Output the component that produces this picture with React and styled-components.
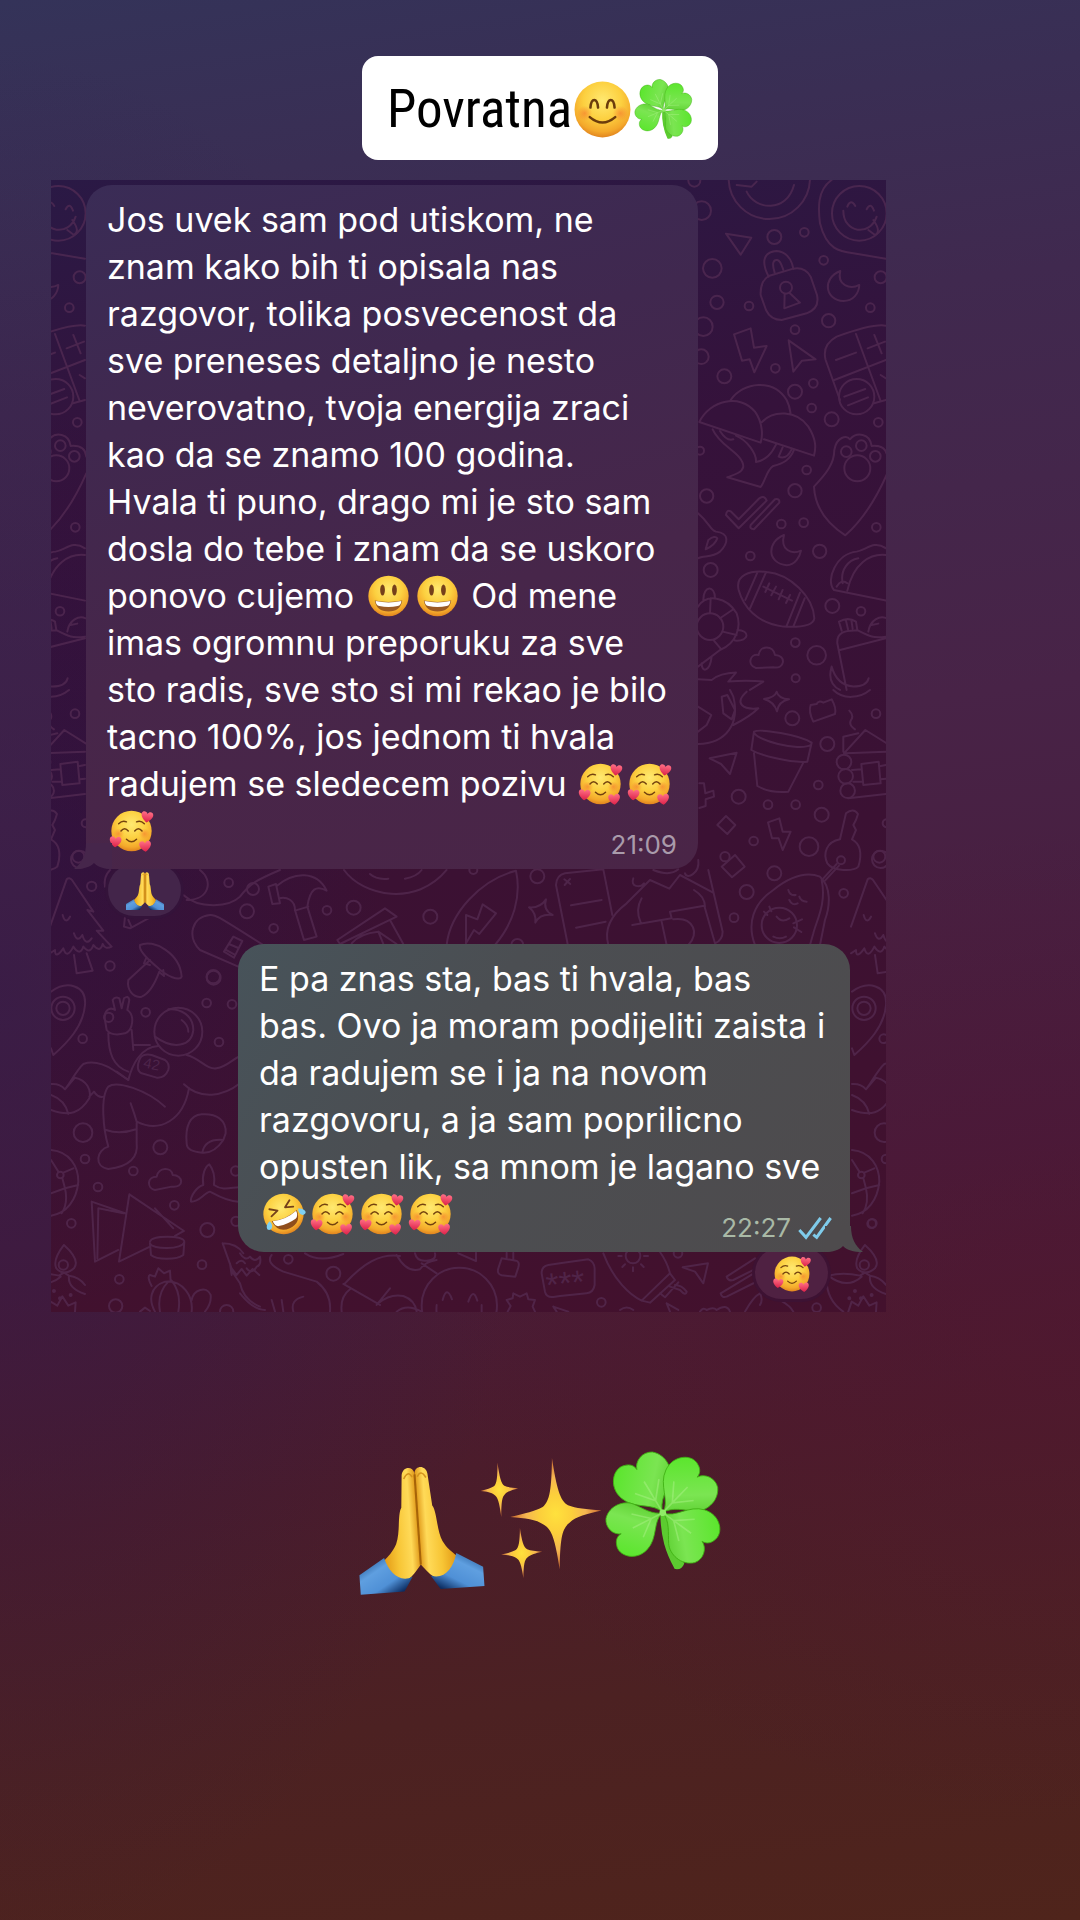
import React from 'react';
import styled, { createGlobalStyle } from 'styled-components';

const GlobalStyle = createGlobalStyle`
  * {
    box-sizing: border-box;
  }
  body {
    margin: 0;
    background: #4b2024;
  }
`;

const Page = styled.main`
  display: flex;
  flex-direction: column;
  min-height: 100vh;
  padding: 56px 51px;
  font-family: Inter, 'Liberation Sans', sans-serif;
  background:
    radial-gradient(ellipse 50% 50% at 0% 52%, rgba(42, 24, 74, 0.45), transparent),
    radial-gradient(ellipse 60% 26% at 100% 69%, rgba(84, 20, 50, 0.45), transparent),
    linear-gradient(
      172deg,
      #343359 0%,
      #40294f 20%,
      #482347 40%,
      #481b3a 62%,
      #4b1c2b 74%,
      #4c2122 86%,
      #4f241b 100%
    );
`;

const Title = styled.h1`
  display: flex;
  align-items: center;
  align-self: center;
  height: 104px;
  margin: 0 0 20px;
  padding: 2px 24px 0 25px;
  border-radius: 16px;
  background: #fff;
  color: #000;
  font-family: 'Liberation Sans Narrow', 'Roboto Condensed', sans-serif;
  font-size: 53px;
  font-weight: 400;
  line-height: 64px;
`;

const Chat = styled.section`
  position: relative;
  display: flex;
  flex-direction: column;
  width: 100%;
  max-width: 835px;
  padding: 5px 36px 13px 35px;
  background:
    radial-gradient(ellipse 40% 40% at 0% 60%, rgba(36, 20, 78, 0.35), transparent),
    linear-gradient(172deg, #2a1945 0%, #35123b 26%, #3b1133 60%, #43112d 100%);
`;

const Wallpaper = styled.svg`
  position: absolute;
  inset: 0;
  width: 100%;
  height: 100%;
  fill: none;
  stroke: #5a3058;
  stroke-width: 6;
  stroke-linejoin: round;
  stroke-linecap: round;
  opacity: 0.62;

  text {
    fill: #5a3058;
    stroke: none;
    font-family: 'Liberation Sans', sans-serif;
  }
`;

const Message = styled.article`
  position: relative;
  display: flex;
  flex-direction: column;
  align-items: ${(props) => (props.$own ? 'flex-end' : 'flex-start')};
  align-self: ${(props) => (props.$own ? 'flex-end' : 'flex-start')};
  width: 100%;
  max-width: 612px;

  & + & {
    margin-top: 28px;
  }
`;

const Bubble = styled.div`
  position: relative;
  width: 100%;
  padding: 11px 21px 10px;
  border-radius: 26px;
  color: #fff;
  background: ${(props) =>
    props.$own
      ? 'linear-gradient(125deg, #47535a 0%, #4b4e52 35%, #4e4b4d 100%)'
      : 'linear-gradient(165deg, #3a2c56 0%, #40284f 30%, #47264a 60%, #4a2547 100%)'};
`;

const Tail = styled.svg`
  position: absolute;
  bottom: 0;
  width: 38px;
  height: 26px;
  ${(props) => (props.$own ? 'right: -13px; transform: scaleX(-1);' : 'left: -12px;')}
  fill: ${(props) => (props.$own ? '#4e4b4d' : '#46264b')};
`;

const Line = styled.p`
  margin: 0;
  font-size: 34px;
  line-height: 47px;
  white-space: pre;
`;

const LastLine = styled.div`
  display: flex;
  justify-content: space-between;
  min-height: 52px;
`;

const Meta = styled.div`
  display: flex;
  align-items: center;
  align-self: flex-end;
  gap: 7px;
  color: ${(props) => (props.$own ? '#a9b9a6' : '#a99bab')};
  font-size: 26px;
  line-height: 28px;
`;

const Ticks = styled.svg`
  width: 34px;
  height: 24px;
  margin-right: -3px;
  fill: none;
  stroke: #7fcbea;
  stroke-width: 9;
`;

const Reaction = styled.button`
  display: flex;
  align-items: center;
  justify-content: center;
  width: 73px;
  height: 52px;
  margin: -5px 22px 0;
  padding: 2px 0 0;
  border: 0;
  border-radius: 26px;
  background: ${(props) => (props.$own ? '#4f2142' : '#43254a')};
  box-shadow: 0 0 0 3px ${(props) => (props.$own ? '#3d1233' : '#34133a')};
`;

const Glyph = styled.svg`
  flex: none;
  width: ${(props) => props.$size}px;
  height: ${(props) => props.$size}px;
`;

const InlineGlyph = styled(Glyph)`
  width: 49px;
  height: 44px;
  vertical-align: -10px;
`;

const Stickers = styled.div`
  display: flex;
  align-items: center;
  justify-content: center;
  margin-top: 146px;
  transform: rotate(-4deg);
`;

const HiddenDefs = styled.svg`
  position: absolute;
  width: 0;
  height: 0;
`;

const EmojiPaints = () => (
  <HiddenDefs aria-hidden="true">
    <defs>
      <radialGradient id="face" cx="50%" cy="34%" r="68%">
        <stop offset="0" stopColor="#ffe971" />
        <stop offset="0.5" stopColor="#fcd040" />
        <stop offset="0.82" stopColor="#f4a92b" />
        <stop offset="1" stopColor="#dd7d1d" />
      </radialGradient>
      <radialGradient id="blush">
        <stop offset="0" stopColor="#f4662b" stopOpacity="0.5" />
        <stop offset="1" stopColor="#f4662b" stopOpacity="0" />
      </radialGradient>
      <linearGradient id="heart" x1="0" y1="0" x2="0" y2="1">
        <stop offset="0" stopColor="#ff6f86" />
        <stop offset="1" stopColor="#dc2048" />
      </linearGradient>
      <linearGradient id="hand" x1="0" y1="0" x2="1" y2="0">
        <stop offset="0" stopColor="#e39a16" />
        <stop offset="0.4" stopColor="#f7c535" />
        <stop offset="0.78" stopColor="#ffda58" />
        <stop offset="1" stopColor="#e0991a" />
      </linearGradient>
      <linearGradient id="cuff" x1="0.1" y1="0" x2="0.9" y2="0.9">
        <stop offset="0" stopColor="#1f5492" />
        <stop offset="0.35" stopColor="#5f9fe0" />
        <stop offset="0.7" stopColor="#4f90d6" />
        <stop offset="1" stopColor="#0c2d62" />
      </linearGradient>
      <radialGradient id="star">
        <stop offset="0" stopColor="#ffe13d" />
        <stop offset="0.35" stopColor="#fccf3b" />
        <stop offset="0.65" stopColor="#f5b651" />
        <stop offset="1" stopColor="#c9662f" />
      </radialGradient>
      <linearGradient id="leaf" x1="0" y1="0" x2="1" y2="1">
        <stop offset="0" stopColor="#55e626" />
        <stop offset="0.55" stopColor="#7be552" />
        <stop offset="1" stopColor="#45bd17" />
      </linearGradient>
      <path
        id="leafShape"
        d="M0 0C-1-5-8-6-10-12C-12-18-7-23-3-21.500C-1-21 0-19.500 0-18C1-21 5-22.500 8-20.500C12-17 11-11 8-8.500C5-6 1-4 0 0Z"
      />
      <path id="heartShape" d="M0 5C-3 3-6 0-5.500-3C-5-6-1-6 0-3C1-6 5-6 5.500-3C6 0 3 3 0 5Z" />
      <path
        id="starShape"
        d="M0-22C1-10 2-5 5-3C8-1.500 12-1 18 0C12 1 8 1.500 5 4C2 6 1 10 0 22C-1 10-2 6-5 4C-8 1.500-12 1-18 0C-12-1-8-1.500-5-3C-2-5-1-10 0-22Z"
      />
    </defs>
  </HiddenDefs>
);

const PrayHalf = () => (
  <>
    <path
      d="M24 2.500C23.500-.5 19.500-.4 19 3L18 15.500C16.300 18 17 25 15 29.500C13.500 32.500 11.500 34 10 35.500C11 40 14.500 43.500 18.500 43.500C20.500 42.500 22 40.500 24 38Z"
      fill="url(#hand)"
    />
    <path d="M19.700 4.500Q21.500 1 23 4" stroke="#d4931d" strokeWidth="0.6" fill="none" />
    <path d="M10 34.500L0 40.500V48H17L20.500 42.500C15.500 44.500 11.500 40.500 10 34.500Z" fill="url(#cuff)" />
  </>
);

const emojis = {
  blush: (
    <>
      <circle cx="24" cy="24" r="22" fill="url(#face)" />
      <circle cx="10" cy="27" r="6" fill="url(#blush)" />
      <circle cx="38" cy="27" r="6" fill="url(#blush)" />
      <g fill="none" stroke="#6b3c0c" strokeLinecap="round" strokeWidth="2">
        <path d="M14.500 22.500Q15 16.500 17.500 16.500T20.500 22.500" />
        <path d="M27.500 22.500Q28 16.500 30.500 16.500T33.500 22.500" />
        <path d="M14 30Q24 38.500 34 30" />
      </g>
    </>
  ),
  grin: (
    <>
      <circle cx="24" cy="24" r="22" fill="url(#face)" />
      <ellipse cx="17.500" cy="17.500" rx="2.600" ry="6" fill="#75401a" />
      <ellipse cx="30.500" cy="17.500" rx="2.600" ry="6" fill="#75401a" />
      <path d="M9 29Q24 32 39 29Q37 41 24 41T9 29Z" fill="#9a5a24" />
      <path d="M10 29.500Q24 32.500 38 29.500Q38 34 34 35Q24 37 14 35Q10 34 10 29.500Z" fill="#fff" />
    </>
  ),
  love: (
    <>
      <circle cx="24" cy="24" r="22" fill="url(#face)" />
      <circle cx="10" cy="27" r="6" fill="url(#blush)" />
      <circle cx="38" cy="27" r="6" fill="url(#blush)" />
      <g fill="none" stroke="#73420f" strokeLinecap="round" strokeWidth="1.600">
        <path d="M10 16Q14 12 18.500 14" />
        <path d="M29.500 14Q34 12 38 16" />
        <path d="M12.500 24Q16.500 19 20.500 24" />
        <path d="M27.500 24Q31.500 19 35.500 24" />
        <path d="M18.500 33Q24 38.500 29.500 33" />
      </g>
      <use href="#heartShape" transform="translate(41 9) rotate(8) scale(1.150)" fill="url(#heart)" />
      <use href="#heartShape" transform="translate(6.500 36) rotate(4) scale(1.150)" fill="url(#heart)" />
      <use href="#heartShape" transform="translate(39 41) rotate(-4) scale(1.150)" fill="url(#heart)" />
    </>
  ),
  rofl: (
    <g transform="rotate(-24 24 24)">
      <circle cx="24" cy="24" r="22" fill="url(#face)" />
      <g fill="none" stroke="#75401a" strokeWidth="2" strokeLinecap="round" strokeLinejoin="round">
        <path d="M12 13L19.500 18L11 21" />
        <path d="M36 13L28.500 18L37 21" />
      </g>
      <path d="M9 26Q24 31 39 26Q38 41 24 41T9 26Z" fill="#8f4e1c" />
      <path d="M10 26.500Q24 31 38 26.500Q38 33 34 34Q24 36 14 34Q10 33 10 26.500Z" fill="#fff" />
      <path d="M1 32Q1 27 7 25Q9 30 6 33Q3 35 1 32Z" fill="#7fd0f2" />
      <path d="M47 32Q47 27 41 25Q39 30 42 33Q45 35 47 32Z" fill="#7fd0f2" />
    </g>
  ),
  pray: (
    <>
      <PrayHalf />
      <g transform="translate(48 0) scale(-1 1)">
        <PrayHalf />
      </g>
      <path d="M24 3V38" stroke="#a76408" strokeWidth="0.8" />
    </>
  ),
  sparkles: (
    <g fill="url(#star)">
      <use href="#starShape" transform="translate(30 22)" />
      <use href="#starShape" transform="translate(8.500 11) scale(0.410 0.490)" />
      <use href="#starShape" transform="translate(15.500 36.500) scale(0.450)" />
    </g>
  ),
  clover: (
    <>
      <path
        d="M23.500 25C23 34 24.500 40 27.500 46.500Q29.500 47 30.500 45C27 39 25 33 25 25Z"
        fill="#5ccb30"
        stroke="#5ccb30"
        strokeWidth="1"
        strokeLinejoin="round"
      />
      {[
        [-27, 1.1],
        [48, 1.08],
        [-113, 1.02],
        [130, 1.06],
      ].map(([angle, scale]) => (
        <g key={angle} transform={`translate(24 24.500) rotate(${angle}) scale(${scale})`}>
          <use href="#leafShape" fill="url(#leaf)" stroke="#3fb012" strokeWidth="0.3" />
          <path
            d="M0 0V-13M0-5L-5-11M0-5L5-11"
            fill="none"
            stroke="#b6f593"
            strokeOpacity="0.4"
            strokeWidth="0.6"
          />
        </g>
      ))}
      <circle cx="24" cy="24.500" r="1.300" fill="#8fec66" />
    </>
  ),
};

const labels = {
  blush: '😊',
  grin: '😃',
  love: '🥰',
  rofl: '🤣',
  pray: '🙏',
  sparkles: '✨',
  clover: '🍀',
};

const Emoji = ({ name, size, as: Component = Glyph }) => (
  <Component $size={size} viewBox="0 0 48 48" overflow="visible" role="img" aria-label={labels[name]}>
    {emojis[name]}
  </Component>
);

// each doodle block is drawn at 3x, "repeat" is the horizontal period of the wallpaper
const doodles = [
  {
    x: 640,
    y: 170,
    repeat: -801,
    dots: [
      [185, 122, 28], [403, 201, 21], [493, 187, 13], [217, 295, 28], [551, 271, 13], [722, 322, 18],
      [231, 397, 20], [327, 408, 13], [691, 413, 13], [566, 452, 20], [465, 479, 13], [190, 470, 28],
      [184, 560, 22], [406, 595, 13], [253, 619, 21], [520, 640, 13], [465, 665, 21], [515, 714, 13],
      [575, 748, 21], [715, 757, 13], [500, 900, 13], [465, 962, 20], [200, 978, 20], [424, 1062, 13],
      [491, 1058, 13], [709, 1072, 13], [539, 1144, 20], [331, 1158, 13], [212, 1200, 21],
      [577, 1308, 21], [663, 1324, 13], [466, 1418, 13], [530, 1456, 28], [467, 1525, 12],
      [163, 32, 18], [658, 130, 82], [388, 25, 122], [438, 353, 18], [650, 680, 53], [664, 827, 16],
      [619, 845, 16], [706, 859, 16], [652, 895, 39], [210, 1370, 40], [180, 842, 12],
    ],
    lines: [
      'M258 191L334 203L302 254Z',
      'M386 318Q360 335 362 375L378 420Q392 450 425 450L500 430Q540 415 531 375L512 320Q495 290 460 296Z',
      'M386 320C360 270 375 245 410 243C440 245 455 270 460 296M404 308C395 280 400 268 412 270C422 272 425 285 430 300M434 372L433 415L480 398L448 368',
      'M601 303C545 325 555 390 610 393C640 393 657 370 658 345C630 360 590 345 601 303Z',
      'M282 493L332 475L342 533L380 528L343 607L329 568L306 572Z',
      'M446 511L527 568L486 572L460 605Z',
      'M738 467Q700 460 590 500Q545 525 557 570L600 690M648 492L722 693M583 630L738 570M588 570L648 548M683 535L735 515M703 495L725 550M613 680L676 657M624 706L684 682M702 700L738 690M722 615L738 625',
      'M178 756C210 690 300 670 345 725C370 760 368 800 362 818L178 756M272 690C310 635 400 625 440 690C450 710 450 720 452 733M366 756C400 720 470 720 505 770C530 810 528 835 522 857L372 808',
      'M218 778C240 830 310 850 310 890C305 910 280 915 262 922L362 951C375 935 380 900 400 888C430 880 450 870 462 840M288 797C320 810 350 850 348 876C380 870 395 850 408 824M240 783Q260 815 280 808M428 832L416 860Q440 870 455 838',
      'M522 950C560 910 583 880 583 840C590 800 620 795 630 808C650 785 690 790 695 828C730 825 740 840 742 860M522 950C525 1010 560 1060 616 1096C680 1040 720 960 742 910',
      'M258 1035Q260 1018 272 1024L296 1048L358 985Q375 975 380 992L296 1075ZM332 1065L405 988Q420 985 418 998L342 1078Q328 1078 332 1065Z',
      'M174 1030C210 1060 210 1080 228 1085C270 1090 265 1120 240 1145C215 1165 190 1155 174 1165M197 1138L205 1110Q225 1095 232 1105Q225 1125 197 1138Z',
      'M432 1095C380 1115 380 1180 440 1186C465 1185 480 1160 483 1142C455 1155 420 1140 432 1095Z',
      'M296 1260C285 1215 330 1200 380 1206C450 1212 520 1280 523 1345C520 1370 470 1372 430 1370C350 1360 310 1310 296 1260ZM316 1290L352 1208M330 1315L378 1207M440 1368L480 1268M460 1370L494 1285M370 1250L456 1292M388 1240l-12 26M408 1250l-14 26M428 1260l-12 28M450 1275l-12 24',
      'M582 1260C555 1230 590 1150 650 1145C680 1140 700 1110 738 1135M738 1155C690 1150 640 1180 622 1262M582 1260L738 1292M608 1240C600 1200 625 1170 655 1165M590 1250Q605 1225 622 1240',
      'M174 1310C200 1270 260 1280 290 1330C305 1370 290 1420 240 1440L174 1490M210 1330L212 1285M240 1345L280 1318M248 1385L290 1395M220 1410L242 1436M190 1290C190 1245 225 1245 225 1285M292 1380C330 1380 330 1415 285 1412M185 1480C185 1510 210 1505 215 1460',
      'M348 1494C320 1485 330 1450 356 1455C360 1425 400 1425 405 1455C440 1455 435 1500 400 1492Z',
      'M605 1382L597 1355Q625 1340 648 1355L652 1380M618 1352l6 26M634 1350l4 26M592 1420C590 1390 610 1380 655 1382C690 1400 700 1405 738 1400M592 1420L620 1560M600 1440L738 1405M685 1385C690 1350 720 1335 740 1345M695 1365l20-4M575 1490Q590 1545 640 1550Q680 1550 686 1525M575 1490Q560 1540 600 1560',
      'M622 110Q632 85 646 108M680 118Q692 95 702 122M610 122C610 190 690 200 710 140M685 180L705 195Q725 185 700 150',
      'M575 30C530 60 535 120 540 160C560 240 600 245 640 250L738 266M320 65C345 120 440 130 462 45M290 45L335 50L350 35',
      'M174 1528L215 1530Q240 1510 288 1508L265 1535Q320 1530 370 1535L330 1560',
    ],
  },
  {
    x: 640,
    y: 690,
    repeat: -801,
    dots: [
      [457, 85, 21], [708, 71, 13], [562, 162, 21], [535, 285, 13], [296, 320, 21], [384, 344, 13],
      [467, 344, 13], [545, 374, 21], [341, 453, 13], [507, 470, 28], [403, 550, 21], [320, 606, 21],
      [282, 683, 13], [611, 610, 13], [722, 508, 26], [612, 216, 22], [617, 259, 22], [623, 302, 22],
      [603, 511, 12], [255, 500, 14], [418, 706, 53], [740, 400, 12],
    ],
    lines: [
      'M410 5Q415 25 447 28Q415 35 411 64Q402 35 372 27Q405 22 410 5Z',
      'M512 45Q505 65 520 95L585 72Q590 55 575 28L550 38Q535 30 530 42Z',
      'M342 125C360 115 480 135 515 158L502 215C450 220 360 195 334 180ZM342 125C340 150 480 185 512 165M342 190L352 288Q390 310 445 305L490 218',
      'M209 205L290 188L270 252L243 222Z',
      'M178 280l14 0l4 30l24-8l2 18l-25 8l0 20l-19 6',
      'M232 405L258 378L286 405L262 432ZM245 530L285 495L314 530L276 562Z',
      'M384 397L418 385L428 425L452 425L428 480L416 445L396 445Z',
      'M612 190L676 120L740 160M618 190L738 185M610 185L610 140L655 130M636 240L664 238M664 222L716 215L722 280L670 285ZM640 275L668 275M625 325L738 312M722 228L738 225M722 268L738 266M628 62q15 15 5 28q-8 15 12 28',
      'M600 448L618 370Q640 352 654 372L648 390L640 405L648 420L636 448C660 460 668 490 655 530C640 545 580 545 562 520C548 490 560 455 600 448M590 522L550 565M597 527L555 572',
      'M345 765C320 700 340 640 400 600C450 560 500 545 540 560C575 590 570 650 555 690L540 765M545 570C560 640 530 690 520 730L510 765M445 600q5 18 22 15M478 620q5 15 22 15M448 630q8 18 25 10M410 680q15 20 38 5M400 740q20 10 38 0M460 700l26-12M462 712l22 14M372 665l10 10M388 650l6 14',
      'M174 162C260 160 300 100 280 20L270 0M245 20L262 15L285 60L275 88L250 70ZM174 50L214 75L200 105L174 125M320 5C280 40 310 60 355 55C330 80 300 95 280 105',
      'M580 0C610 30 660 25 690 0',
    ],
  },
  {
    x: 440,
    y: 860,
    dots: [[292, 49, 21], [232, 255, 18], [100, 30, 12]],
    lines: [
      'M20 255C30 160 120 60 228 32C245 110 220 190 165 255M78 250L78 165L112 178L128 133L168 160L118 222L102 210L78 250',
      'M318 118Q308 150 338 165Q300 160 286 188Q290 160 267 142Q300 145 318 118Z',
      'M383 252L348 75Q350 45 375 40L490 28L517 165M393 136L485 120M408 203L497 185M373 58l18 14M390 57l-16 18',
      'M505 255C490 200 520 160 560 130L630 60L688 86L720 45L818 97M580 55C570 80 600 85 612 70M577 195L695 175L690 155L793 137L825 250M665 185L680 255M700 178C760 170 780 220 745 255M605 115Q585 150 602 187M762 90Q795 110 795 140M805 30L848 215Q848 240 825 250M775 0C780 40 740 60 735 40M640 30Q690 50 715 28',
    ],
  },
  {
    x: 50,
    y: 720,
    repeat: 801,
    dots: [
      [125, 499, 14], [180, 738, 14], [536, 488, 13], [609, 507, 18], [591, 574, 21], [671, 625, 13],
      [831, 571, 13], [911, 563, 21], [1141, 590, 21], [85, 410, 18], [490, 770, 20],
    ],
    lines: [
      'M0 620L50 478Q58 470 66 480L130 575L112 570L160 632L140 632L185 680Q165 690 158 672Q150 700 130 675Q120 705 100 680Q90 710 70 680Q50 720 40 685Q15 720 15 690L0 700M72 705L80 760L128 752L110 700M38 585q8 30 22 5M72 640q10 30 25 5q10 35 28 10',
      'M655 500L678 492L690 550L667 552ZM680 498C730 455 800 450 830 512C800 495 780 505 772 560L800 650L762 660L735 570C735 540 710 530 688 535M735 572L775 560',
      'M565 740L450 690C410 650 425 590 480 585C500 583 520 600 640 675M550 650l-28 45l30 18l25-50ZM537 672l28 12M528 690l26 14',
      'M400 525C450 570 540 560 570 530C600 490 620 480 690 450M450 450C490 480 480 540 410 540',
      'M862 660L1005 565L1040 590L870 672ZM1020 600L1060 672M905 670Q930 640 985 635L1000 672M985 635L1040 672',
      'M882 450C940 530 1100 560 1190 450M960 462Q980 480 1015 476M1065 476Q1100 470 1115 450',
      'M225 590L222 620L240 625L295 595M235 600L245 622M165 500Q160 470 180 450',
    ],
  },
  {
    x: 40,
    y: 930,
    repeat: 801,
    dots: [
      [521, 143, 21], [500, 219, 13], [576, 223, 13], [317, 247, 13], [128, 326, 13], [69, 235, 35],
      [69, 235, 20], [537, 336, 13], [129, 608, 28], [361, 652, 21], [135, 687, 13], [280, 723, 13],
      [174, 771, 13], [403, 826, 13], [94, 880, 13], [502, 900, 21], [486, 1004, 13], [238, 1048, 13],
      [227, 1128, 20], [587, 723, 14], [588, 874, 14], [61, 735, 10], [415, 305, 72], [560, 1145, 20],
      [206, 262, 14],
    ],
    lines: [
      'M300 45C340 25 420 70 425 140C420 155 380 140 350 110C320 85 295 60 300 45ZM330 90L265 150C260 180 280 205 305 200C330 190 345 160 358 125M318 85L312 100L330 105M370 120L372 138L360 128',
      'M33 185C80 150 140 165 135 225C130 290 80 340 40 375L33 355',
      'M345 320C400 360 455 350 460 300C460 255 420 235 385 238M425 270Q445 285 445 305',
      'M195 270C190 240 210 230 225 240L218 210Q225 198 238 205L245 235L252 205Q265 195 268 210L262 240C285 255 280 300 255 310Q215 320 200 300ZM205 310C205 370 220 410 265 425M275 300L280 360M355 348C300 350 275 410 265 450L230 425M280 345L330 345',
      'M300 385Q310 370 335 375L375 390Q390 400 385 420Q375 445 350 443L305 430Q285 420 300 385Z',
      'M440 375C480 385 500 420 530 415C560 410 575 390 600 378M432 463C480 510 550 500 600 460',
      'M265 450L220 420C180 395 150 395 130 402C110 420 90 460 75 478Q60 460 33 462M75 478L105 443C140 450 155 480 148 505C120 550 90 560 33 540M148 500L162 485Q175 505 192 500M33 495Q75 510 85 552',
      'M375 530C320 480 230 450 205 470C180 500 190 600 205 650C170 660 160 710 205 717C270 710 295 680 290 640L290 575C280 540 275 530 272 520M198 600Q240 615 288 598M290 575C360 610 430 570 447 475',
      'M440 640C435 590 450 555 485 553C530 550 560 570 557 610L550 630C530 660 510 670 487 668C460 665 440 660 440 640ZM487 668Q495 625 550 630',
      'M33 660C90 665 115 710 115 755C110 810 80 850 33 857M55 725L33 690M70 728L100 715M67 745L75 775L115 765M33 790L75 775Q85 820 65 850',
      'M345 780C320 775 320 740 350 740C355 710 395 710 398 735C430 735 435 775 395 770Z',
      'M595 815C560 815 520 790 510 785C490 790 480 815 453 815C450 800 470 770 490 765C485 735 495 710 508 703C525 725 525 745 522 765C550 785 580 770 600 772',
      'M155 815L255 850M155 815L165 995L235 960M175 835L172 985M175 835L250 850M268 793L432 903L405 918M268 793L237 995L330 950M345 835L400 895',
      'M330 935C335 915 430 915 433 935C430 960 335 960 330 940L333 975C350 990 410 990 430 975L433 935',
      'M345 1145C325 1110 330 1070 375 1055C430 1050 460 1100 455 1145M360 1145Q350 1090 385 1055M415 1145Q425 1090 395 1052M335 1068Q320 1040 330 1035L345 1040L355 1015L372 1030L390 1022L392 1055M455 1110C460 1080 500 1065 512 1095Q515 1120 495 1145M300 1145l15-12l15 10',
      'M548 940L580 1030L600 1060Q610 1110 660 1130M548 940Q590 940 610 970M575 1035L570 1000M575 1015l15 20l15-18l15 20l18-20l20 18M590 1000q15-15 25 0',
    ],
    text: [{ x: 308, y: 412, rotate: 12, size: 44, value: '42' }],
  },
  {
    x: 240,
    y: 1130,
    dots: [[145, 388, 13], [280, 431, 21], [658, 526, 113]],
    lines: [
      'M0 370q15 25 30 10q15 20 30 0q5 25-10 30q-15 25-30 5M95 375Q75 400 130 425L230 455Q275 490 270 545M0 490Q40 540 75 540M95 510l10 35M130 545l-5-35M160 545Q150 510 190 500M195 370Q240 400 310 372',
      'M315 460C370 400 420 370 480 378M310 462L420 525M305 545Q300 500 330 478M410 525L450 475M415 520Q450 490 490 498Q525 510 530 545M470 375Q500 430 540 418Q555 395 590 390M545 400L590 430M470 545Q500 520 545 545M525 370Q530 395 560 392Q590 390 585 370',
      'M608 510Q620 465 636 508M685 515Q700 470 712 512M590 525Q588 545 592 560M725 525v30',
      'M655 370L708 393L708 368M785 385L828 392Q840 395 835 412L826 440L785 436Q770 432 775 415ZM800 385V368M820 388V368',
      'M800 510L818 505L820 490L840 500L860 490L865 508L885 510L878 530L885 545M800 510L812 528L803 545M940 530L950 545M940 530L985 545',
      'M960 400L925 405Q905 408 905 430L915 485Q920 505 945 500L960 498M960 400L1045 388Q1063 395 1064 415L1064 465Q1060 488 1040 490L960 498',
    ],
    text: [{ x: 922, y: 500, rotate: -6, size: 100, value: '***' }],
  },
  {
    x: 560,
    y: 1130,
    dots: [[124, 517, 13], [354, 370, 13], [770, 533, 13], [935, 281, 13], [219, 378, 22]],
    lines: [
      'M130 370C160 450 210 495 245 512L330 430C325 410 310 380 300 366M245 512L270 518L345 450L330 430M300 490l15 12l40-45M330 470L360 480Q378 500 380 485Q365 465 345 465',
      'M219 412v12M185 378h-10M252 378h12M195 403l-8 8M243 403l8 8',
      'M368 412L444 400L430 460L405 425Z',
      'M585 385L500 440Q505 455 520 450L590 415M590 425L482 490Q485 505 500 500L600 450',
      'M555 545Q580 500 600 490Q610 510 600 525M600 490Q680 510 700 545M320 520l10 25M320 520l35 20M420 545q10-15 20-5q20-10 30 0q30-20 40 5M180 540q20-15 40 0',
    ],
  },
  {
    x: 560,
    y: 1130,
    repeat: -801,
    dots: [[913, 405, 14], [885, 483, 3], [903, 505, 3], [868, 505, 3], [935, 495, 3]],
    lines: [
      'M915 345Q880 390 892 415Q915 440 945 415Q965 390 915 345Z',
      'M805 437Q850 425 900 437L915 428L930 437Q960 440 978 465M805 437Q860 480 905 440M800 450Q800 510 850 545M930 437Q925 475 978 492M865 545l10-30l20 12l15-28l18 28l22-10l-2 30',
    ],
  },
];

const DoodleBlock = ({ block, shift = 0 }) => (
  <g transform={`translate(${block.x + shift} ${block.y}) scale(0.3333)`}>
    {block.dots.map(([cx, cy, r]) => (
      <circle key={`${cx}-${cy}-${r}`} cx={cx} cy={cy} r={r} />
    ))}
    {block.lines.map((d) => (
      <path key={d} d={d} />
    ))}
    {shift === 0 &&
      (block.text || []).map((item) => (
        <text
          key={item.value}
          fontSize={item.size}
          transform={`translate(${item.x} ${item.y}) rotate(${item.rotate})`}
        >
          {item.value}
        </text>
      ))}
  </g>
);

const ChatWallpaper = () => (
  <Wallpaper viewBox="51 180 835 1132" preserveAspectRatio="xMinYMin slice" aria-hidden="true">
    {doodles.map((block, index) => (
      <React.Fragment key={index}>
        <DoodleBlock block={block} />
        {block.repeat && <DoodleBlock block={block} shift={block.repeat} />}
      </React.Fragment>
    ))}
  </Wallpaper>
);

const RichText = ({ text }) =>
  text
    .split(/:(\w+):/)
    .map((part, index) =>
      index % 2 ? <Emoji key={index} name={part} as={InlineGlyph} /> : part
    );

const messages = [
  {
    id: 1,
    time: '21:09',
    reaction: 'pray',
    lines: [
      'Jos uvek sam pod utiskom, ne',
      'znam kako bih ti opisala nas',
      'razgovor, tolika posvecenost da',
      'sve preneses detaljno je nesto',
      'neverovatno, tvoja energija zraci',
      'kao da se znamo 100 godina.',
      'Hvala ti puno, drago mi je sto sam',
      'dosla do tebe i znam da se uskoro',
      'ponovo cujemo :grin::grin: Od mene',
      'imas ogromnu preporuku za sve',
      'sto radis, sve sto si mi rekao je bilo',
      'tacno 100%, jos jednom ti hvala',
      'radujem se sledecem pozivu :love::love:',
      ':love:',
    ],
  },
  {
    id: 2,
    own: true,
    time: '22:27',
    reaction: 'love',
    lines: [
      'E pa znas sta, bas ti hvala, bas',
      'bas. Ovo ja moram podijeliti zaista i',
      'da radujem se i ja na novom',
      'razgovoru, a ja sam poprilicno',
      'opusten lik, sa mnom je lagano sve',
      ':rofl::love::love::love:',
    ],
  },
];

const ChatMessage = ({ message }) => {
  const { own, time, reaction, lines } = message;
  const last = lines.length - 1;

  return (
    <Message $own={own}>
      <Bubble $own={own}>
        <Tail $own={own} viewBox="0 0 38 26" aria-hidden="true">
          <path d="M12 0C12 12 8 20 0 26C10 26 16 24 20 20C24 24 30 26 38 26V0Z" />
        </Tail>
        {lines.slice(0, last).map((line) => (
          <Line key={line}>
            <RichText text={line} />
          </Line>
        ))}
        <LastLine>
          <Line>
            <RichText text={lines[last]} />
          </Line>
          <Meta $own={own}>
            <time>{time}</time>
            {own && (
              <Ticks viewBox="0 0 102 72" role="img" aria-label="Read">
                <path d="M4 42L24 64L68 6M46 56L56 64L98 6" />
              </Ticks>
            )}
          </Meta>
        </LastLine>
      </Bubble>
      <Reaction type="button" $own={own}>
        <Emoji name={reaction} size={38} />
      </Reaction>
    </Message>
  );
};

const App = () => (
  <>
    <GlobalStyle />
    <EmojiPaints />
    <Page>
      <Title>
        Povratna
        <Emoji name="blush" size={61} />
        <Emoji name="clover" size={61} />
      </Title>
      <Chat>
        <ChatWallpaper />
        {messages.map((message) => (
          <ChatMessage key={message.id} message={message} />
        ))}
      </Chat>
      <Stickers>
        <Emoji name="pray" size={124} />
        <Emoji name="sparkles" size={122} />
        <Emoji name="clover" size={122} />
      </Stickers>
    </Page>
  </>
);

export default App;
